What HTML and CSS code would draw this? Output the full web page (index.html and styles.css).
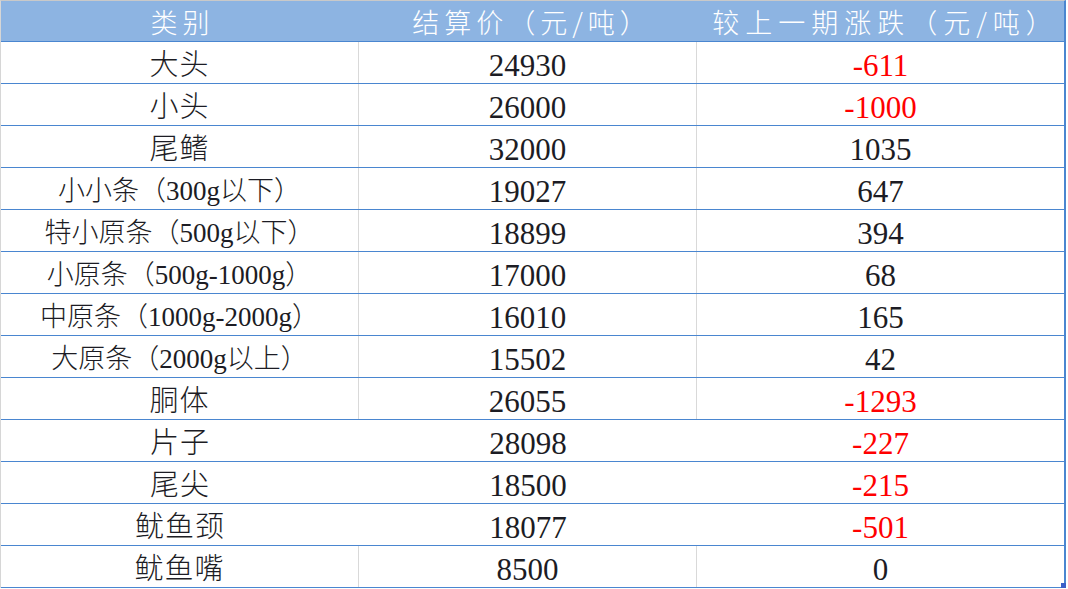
FILE: index.html
```html
<!DOCTYPE html>
<html lang="zh">
<head>
<meta charset="utf-8">
<title>价格表</title>
<link rel="stylesheet" href="styles.css">
</head>
<body>
<div class="sheet">
  <div class="row head">
    <div class="cell h1">类别</div>
    <div class="cell h2">结算价（元/吨）</div>
    <div class="cell h3">较上一期涨跌（元/吨）</div>
  </div>
  <div class="row lined">
    <div class="cell name big">大头</div>
    <div class="cell num">24930</div>
    <div class="cell num neg">-611</div>
  </div>
  <div class="row lined">
    <div class="cell name big">小头</div>
    <div class="cell num">26000</div>
    <div class="cell num neg">-1000</div>
  </div>
  <div class="row lined">
    <div class="cell name big">尾鳍</div>
    <div class="cell num">32000</div>
    <div class="cell num">1035</div>
  </div>
  <div class="row lined">
    <div class="cell name">小小条（300g以下）</div>
    <div class="cell num">19027</div>
    <div class="cell num">647</div>
  </div>
  <div class="row lined">
    <div class="cell name">特小原条（500g以下）</div>
    <div class="cell num">18899</div>
    <div class="cell num">394</div>
  </div>
  <div class="row lined">
    <div class="cell name">小原条（500g-1000g）</div>
    <div class="cell num">17000</div>
    <div class="cell num">68</div>
  </div>
  <div class="row lined">
    <div class="cell name">中原条（1000g-2000g）</div>
    <div class="cell num">16010</div>
    <div class="cell num">165</div>
  </div>
  <div class="row lined">
    <div class="cell name">大原条（2000g以上）</div>
    <div class="cell num">15502</div>
    <div class="cell num">42</div>
  </div>
  <div class="row lined">
    <div class="cell name big">胴体</div>
    <div class="cell num">26055</div>
    <div class="cell num neg">-1293</div>
  </div>
  <div class="row">
    <div class="cell name big">片子</div>
    <div class="cell num">28098</div>
    <div class="cell num neg">-227</div>
  </div>
  <div class="row">
    <div class="cell name big">尾尖</div>
    <div class="cell num">18500</div>
    <div class="cell num neg">-215</div>
  </div>
  <div class="row">
    <div class="cell name big">鱿鱼颈</div>
    <div class="cell num">18077</div>
    <div class="cell num neg">-501</div>
  </div>
  <div class="row lined">
    <div class="cell name big">鱿鱼嘴</div>
    <div class="cell num">8500</div>
    <div class="cell num">0</div>
  </div>
  <div class="handle"></div>
</div>
</body>
</html>
```

FILE: styles.css
```css
html, body {
  margin: 0;
  padding: 0;
  background: #ffffff;
}

.sheet {
  position: relative;
  width: 1066px;
  border-top: 1px solid #c9c9c9;
  border-left: 1px solid #d6d6d6;
  border-right: 2px solid #4a86d0;
  box-sizing: border-box;
  font-family: "Liberation Serif", "Noto Sans CJK SC", serif;
  color: #1c1c24;
}

.row {
  display: grid;
  grid-template-columns: 358px 338px 367px;
  height: 42px;
  box-sizing: border-box;
  border-bottom: 1px solid #4a86d0;
}

.row.head {
  height: 41px;
  background: #8db4e2;
}

.cell {
  box-sizing: border-box;
  text-align: center;
  white-space: nowrap;
  overflow: hidden;
}

.row.lined .cell:nth-child(1),
.row.lined .cell:nth-child(2) {
  border-right: 1px solid #d9d9d9;
}

.head .cell {
  color: #ffffff;
  font-family: "Noto Sans CJK SC", sans-serif;
  font-weight: 300;
  font-size: 27px;
  line-height: 38px;
  padding-top: 2px;
}

.h1 {
  letter-spacing: 5px;
  padding-left: 5px;
}

.h2 {
  letter-spacing: 5px;
  padding-left: 8px;
}

.h3 {
  letter-spacing: 6px;
  padding-left: 10px;
}

.name {
  font-family: "Liberation Serif", "Noto Sans CJK SC", serif;
  font-weight: 300;
  font-size: 27px;
  line-height: 36px;
  padding-top: 5px;
}

.name.big {
  font-size: 29px;
  letter-spacing: 1px;
}

.num {
  font-family: "Liberation Serif", serif;
  font-size: 31px;
  line-height: 33px;
  padding-top: 7px;
}

.neg {
  color: #ff0000;
}

.handle {
  position: absolute;
  right: -2px;
  bottom: 0;
  width: 5px;
  height: 5px;
  background: #3a5fc8;
}
```
